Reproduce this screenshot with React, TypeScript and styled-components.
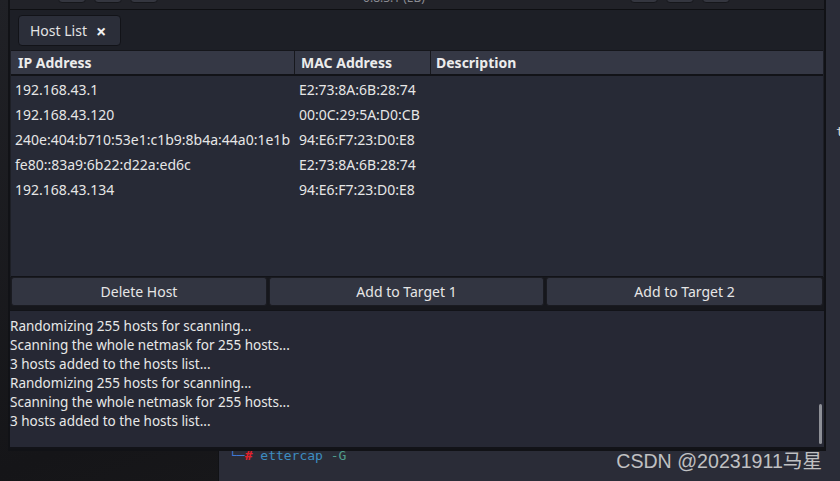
import React from 'react';
import styled, { createGlobalStyle } from 'styled-components';

const GlobalStyle = createGlobalStyle`
  html, body {
    margin: 0;
    padding: 0;
    background: #18191c;
    overflow: hidden;
  }
`;

const hosts = [
  { ip: '192.168.43.1', mac: 'E2:73:8A:6B:28:74', desc: '' },
  { ip: '192.168.43.120', mac: '00:0C:29:5A:D0:CB', desc: '' },
  { ip: '240e:404:b710:53e1:c1b9:8b4a:44a0:1e1b', mac: '94:E6:F7:23:D0:E8', desc: '' },
  { ip: 'fe80::83a9:6b22:d22a:ed6c', mac: 'E2:73:8A:6B:28:74', desc: '' },
  { ip: '192.168.43.134', mac: '94:E6:F7:23:D0:E8', desc: '' },
];

const logLines = [
  'Randomizing 255 hosts for scanning...',
  'Scanning the whole netmask for 255 hosts...',
  '3 hosts added to the hosts list...',
  'Randomizing 255 hosts for scanning...',
  'Scanning the whole netmask for 255 hosts...',
  '3 hosts added to the hosts list...',
];

const Desktop = styled.div`
  position: relative;
  width: 840px;
  height: 481px;
  overflow: hidden;
  background: linear-gradient(160deg, #202126 0%, #151518 60%, #1c1c1e 100%);
  font-family: 'Noto Sans', 'Open Sans', sans-serif;
`;

// terminal window sitting behind the ettercap window
const Terminal = styled.div`
  position: absolute;
  left: 218px;
  top: 0;
  width: 640px;
  height: 481px;
  background: #2a2c37;
  border-left: 1px solid #111215;
  display: flex;
  flex-direction: column;
  font-family: 'DejaVu Sans Mono', monospace;
  font-size: 13px;
  line-height: 17px;
  color: #dcdcdc;
`;

const TermLine = styled.div<{ mt: number; pl: number }>`
  margin-top: ${(p) => p.mt}px;
  padding-left: ${(p) => p.pl}px;
  white-space: pre;
`;

const TermSpan = styled.span<{ color: string; bold?: boolean }>`
  color: ${(p) => p.color};
  font-weight: ${(p) => (p.bold ? 700 : 400)};
`;

const Window = styled.div`
  position: absolute;
  left: 8px;
  top: -36px;
  width: 818px;
  height: 487px;
  box-sizing: border-box;
  border: 2px solid #111216;
  border-top: none;
  background: #1d1f26;
  display: flex;
  flex-direction: column;
  z-index: 2;
`;

const HeaderBar = styled.div`
  height: 46px;
  flex-shrink: 0;
  box-sizing: border-box;
  border-bottom: 1px solid #0e0f12;
  background: #212228;
  display: flex;
  align-items: center;
  padding: 0 6px 0 48px;
`;

const HeaderGroup = styled.div<{ w?: number }>`
  display: flex;
  gap: 8px;
  margin-top: 2px;
  ${(p) => (p.w ? `width: ${p.w}px;` : '')}
`;

const HeaderButton = styled.div`
  width: 28px;
  height: 30px;
  border-radius: 4px;
  background: #34363f;
  border: 1px solid #16171b;
  box-sizing: border-box;
`;

const Subtitle = styled.div`
  flex: 1;
  text-align: center;
  margin-top: 22px;
  font-size: 12px;
  line-height: 15px;
  color: #8a8b92;
`;

const TabBar = styled.div`
  height: 40px;
  flex-shrink: 0;
  box-sizing: border-box;
  padding: 5px 0 0 8px;
  display: flex;
  align-items: flex-start;
`;

const Tab = styled.div`
  height: 31px;
  box-sizing: border-box;
  padding: 0 14px 0 11px;
  display: flex;
  align-items: center;
  gap: 9px;
  background: #2b2e39;
  border: 1px solid #121318;
  border-radius: 4px;
  color: #e4e4e4;
  font-size: 14px;
`;

const TabClose = styled.span`
  font-size: 18px;
  line-height: 18px;
  font-weight: 700;
  color: #f0f0f0;
`;

const Table = styled.div`
  margin: 0 1px;
  height: 226px;
  flex-shrink: 0;
  display: flex;
  flex-direction: column;
  background: #272a36;
  border-bottom: 1px solid #121318;
`;

const columns = '284px 136px 1fr';

const HeadRow = styled.div`
  display: grid;
  grid-template-columns: ${columns};
  height: 26px;
  box-sizing: border-box;
  border-top: 1px solid #15161b;
  border-bottom: 2px solid #121318;
  background: #353845;
`;

const HeadCell = styled.div<{ pl: number }>`
  padding-left: ${(p) => p.pl}px;
  display: flex;
  align-items: center;
  font-size: 14px;
  font-weight: 700;
  color: #ececec;
  border-right: 1px solid #17181d;
  &:last-child {
    border-right: none;
  }
`;

const BodyRow = styled.div`
  display: grid;
  grid-template-columns: ${columns};
  height: 25px;
`;

const BodyCell = styled.div`
  padding-left: 4px;
  padding-top: 1px;
  display: flex;
  align-items: center;
  font-size: 14px;
  color: #e6e6e6;
  white-space: nowrap;
  overflow: hidden;
`;

const ButtonRow = styled.div`
  display: grid;
  grid-template-columns: 256px 275px 1fr;
  gap: 2px;
  padding: 0 1px 4px;
  background: #16171c;
  flex-shrink: 0;
`;

const ActionButton = styled.button`
  height: 29px;
  box-sizing: border-box;
  border: 1px solid #1a1b21;
  border-radius: 3px;
  background: #323541;
  color: #e6e6e6;
  font-family: 'Noto Sans', 'Open Sans', sans-serif;
  font-size: 14px;
  padding: 0;
`;

const Log = styled.div`
  position: relative;
  flex: 1;
  background: #262834;
  border-top: 1px solid #121318;
  border-bottom: 2px solid #121318;
  padding: 6px 0 0 0;
  display: flex;
  flex-direction: column;
`;

const LogLine = styled.div`
  font-size: 13.5px;
  line-height: 19px;
  color: #e8e8e8;
  white-space: nowrap;
`;

const ScrollThumb = styled.div`
  position: absolute;
  right: 2px;
  bottom: 3px;
  width: 3px;
  height: 40px;
  border-radius: 2px;
  background: #8e9097;
`;

const Watermark = styled.div`
  position: absolute;
  right: 18px;
  top: 449px;
  z-index: 3;
  font-family: 'Liberation Sans', 'Noto Sans CJK SC', sans-serif;
  font-size: 19.6px;
  line-height: 24px;
  color: rgba(235, 235, 235, 0.78);
`;

export default function App() {
  return (
    <>
      <GlobalStyle />
      <Desktop>
        <Terminal>
          <TermLine mt={123} pl={617}>t</TermLine>
          <TermLine mt={307} pl={10}>
            <TermSpan color='#3f78d4'>└─</TermSpan>
            <TermSpan color='#e2212b' bold>#</TermSpan>
            <TermSpan color='#3d8cc0'> ettercap</TermSpan>
            <TermSpan color='#4f9c8c'> -G</TermSpan>
          </TermLine>
        </Terminal>

        <Window>
          <HeaderBar>
            <HeaderGroup>
              <HeaderButton />
              <HeaderButton />
              <HeaderButton />
            </HeaderGroup>
            <Subtitle>0.8.3.1 (EB)</Subtitle>
            <HeaderGroup>
              <HeaderButton />
              <HeaderButton />
              <HeaderButton />
            </HeaderGroup>
            <HeaderGroup w={88} />
          </HeaderBar>

          <TabBar>
            <Tab>
              Host List
              <TabClose>×</TabClose>
            </Tab>
          </TabBar>

          <Table>
            <HeadRow>
              <HeadCell pl={7}>IP Address</HeadCell>
              <HeadCell pl={6}>MAC Address</HeadCell>
              <HeadCell pl={5}>Description</HeadCell>
            </HeadRow>
            {hosts.map((h, i) => (
              <BodyRow key={i}>
                <BodyCell>{h.ip}</BodyCell>
                <BodyCell>{h.mac}</BodyCell>
                <BodyCell>{h.desc}</BodyCell>
              </BodyRow>
            ))}
          </Table>

          <ButtonRow>
            <ActionButton>Delete Host</ActionButton>
            <ActionButton>Add to Target 1</ActionButton>
            <ActionButton>Add to Target 2</ActionButton>
          </ButtonRow>

          <Log>
            {logLines.map((line, i) => (
              <LogLine key={i}>{line}</LogLine>
            ))}
            <ScrollThumb />
          </Log>
        </Window>

        <Watermark>CSDN @20231911马星</Watermark>
      </Desktop>
    </>
  );
}
